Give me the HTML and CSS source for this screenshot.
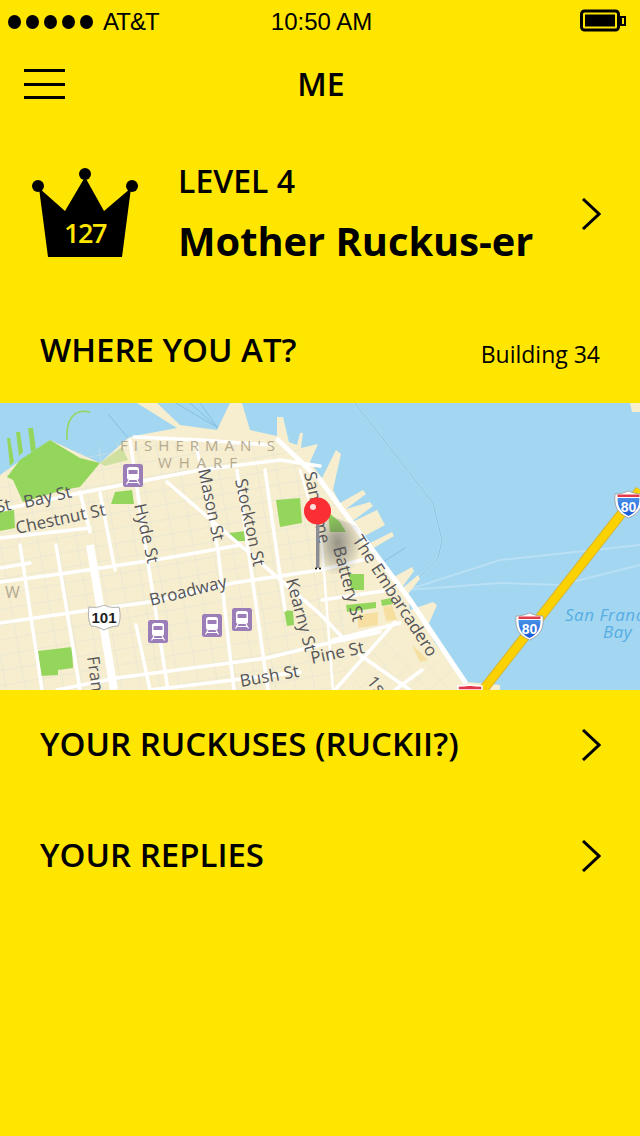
FILE: index.html
```html
<!DOCTYPE html>
<html lang="en">
<head>
    <meta charset="UTF-8">
    <meta name="viewport" content="width=device-width, initial-scale=1.0">
    <title>Me</title>
    <link rel="stylesheet" href="styles.css">
</head>
<body>

    <div class="status-bar">
        <div class="carrier">
            <span class="signal"><i></i><i></i><i></i><i></i><i></i></span>
            <span class="carrier-name">AT&amp;T</span>
        </div>
        <div class="clock">10:50 AM</div>
        <svg class="battery" width="46" height="24" viewBox="0 0 46 24">
            <rect x="1.500" y="2" width="37" height="19" rx="3" fill="none" stroke="#000" stroke-width="3"/>
            <rect x="5" y="5.500" width="30" height="12" fill="#000"/>
            <rect x="41" y="8" width="4" height="8" fill="none" stroke="#000" stroke-width="2"/>
        </svg>
    </div>

    <header class="top-bar">
        <div class="burger"><i></i><i></i><i></i></div>
        <h1>ME</h1>
    </header>

    <section class="level">
        <div class="crown">
            <svg width="108" height="92" viewBox="0 0 108 92">
                <circle cx="53" cy="6" r="6"/>
                <circle cx="6" cy="18" r="6"/>
                <circle cx="100" cy="18" r="6"/>
                <path d="M7 20 L33 43 L53 9 L72 43 L99 20 L90 89 H16 Z"/>
            </svg>
            <span class="crown-num">127</span>
        </div>
        <div class="level-text">
            <div class="level-name">LEVEL 4</div>
            <div class="level-title">Mother Ruckus-er</div>
        </div>
        <svg class="chevron" width="20" height="32" viewBox="0 0 20 32"><path d="M2 1 L18 16 L2 31"/></svg>
    </section>

    <section class="where">
        <h2>WHERE YOU AT?</h2>
        <span class="place">Building 34</span>
    </section>

    <div class="map">
        <svg width="640" height="287" viewBox="0 403 640 287">
            <defs>
                <pattern id="grid" width="19" height="15" patternUnits="userSpaceOnUse" patternTransform="rotate(-10)">
                    <path d="M0 0 H19 M0 0 V15" stroke="#e2e2d6" stroke-width="1" fill="none"/>
                </pattern>
                <pattern id="gridb" width="16" height="16" patternUnits="userSpaceOnUse" patternTransform="rotate(-42)">
                    <path d="M0 0 H16 M0 0 V16" stroke="#e8e5d2" stroke-width="1" fill="none"/>
                </pattern>
                <radialGradient id="shadow" cx="0.45" cy="0.5" r="0.55">
                    <stop offset="0" stop-color="#555" stop-opacity="0.6"/>
                    <stop offset="1" stop-color="#555" stop-opacity="0"/>
                </radialGradient>
                <linearGradient id="shield" x1="0" y1="0" x2="0" y2="1">
                    <stop offset="0" stop-color="#4a90e8"/>
                    <stop offset="1" stop-color="#1659d8"/>
                </linearGradient>
                <g id="train">
                    <rect x="0" y="0" width="20" height="23" rx="2.500" fill="#9b7db8"/>
                    <rect x="4" y="3" width="12" height="13" rx="2.500" fill="#fff"/>
                    <rect x="5.500" y="6" width="9" height="4" fill="#9b7db8"/>
                    <path d="M6 16 L3.500 20.500 M14 16 L16.500 20.500 M4 18.500 H16" stroke="#fff" stroke-width="1.200" fill="none"/>
                </g>
                <g id="i80">
                    <path d="M0 3 C5 3 9 2 13.500 0 C18 2 22 3 27 3 C28 15 25 22 13.500 27 C2 22 -1 15 0 3 Z" fill="#fff" stroke="#999" stroke-width="0.800"/>
                    <path d="M2.500 3.500 H24.500 V6 H2.500 Z" fill="#e2394b"/>
                    <path d="M2.500 7 H24.500 C24.500 15 22 21 13.500 25 C5 21 2.500 15 2.500 7 Z" fill="url(#shield)"/>
                    <text class="shield-num" x="13.500" y="20.500">80</text>
                </g>
            </defs>

            <rect x="0" y="403" width="640" height="287" fill="#a2d6f1"/>

            <!-- water lines -->
            <g fill="none" stroke="#b9e0f4" stroke-width="2">
                <path d="M355 403 L433 503 L442 540 L438 558 L407 590"/>
                <path d="M407 590 L500 560 L640 545"/>
                <path d="M407 590 L500 583 L560 585 L640 565"/>
            </g>
            <g fill="none" stroke="#86c0e2" stroke-width="1">
                <path d="M355 403 L433 503 L442 540 L438 558 L407 590"/>
                <path d="M176 403 L218 428 M190 403 L218 428 M200 403 L218 428"/>
                <path d="M108 414 L128 438"/>
                <path d="M383 562 L405 548"/>
            </g>

            <!-- land -->
            <path fill="#f6eecf" d="M0 475 L7 470 L50 440 L100 463 L128 438 L134 436 L177 428 L137 403 L157 403 L180 425 L217 430 L230 403 L242 403 L250 430 L277 436 L277 417 L283 417 L289 442 L297 445 L300 433 L303 433 L301 448 L318 444 L310 462 L322 478 L336 450 L341 454 L333 490 L340 503 L363 490 L366 494 L346 509 L370 502 L373 506 L350 523 L377 510 L385 525 L357 540 L370 543 L392 532 L394 536 L372 549 L392 578 L412 567 L414 571 L400 590 L418 575 L420 579 L408 594 L410 610 L433 602 L437 605 L427 628 L435 643 L467 682 L500 685 L500 690 L0 690 Z"/>
            <path fill="#f6eecf" d="M630 403 H640 V412 H632 Z"/>
            <path fill="url(#grid)" d="M0 476 L8 470 L128 440 L300 448 L316 476 L345 520 L345 690 L0 690 Z"/>
            <path fill="url(#gridb)" d="M335 610 L395 645 L450 665 L460 690 L330 690 Z"/>

            <!-- parks -->
            <g fill="#94d65c">
                <path d="M7 477 L20 460 L50 440 L80 458 L100 463 L80 487 L63 490 L23 502 L13 480 Z"/>
                <path d="M7 438 L10 438 L14 462 L10 466 Z M16 432 L20 432 L23 452 L19 456 Z M28 428 L33 428 L36 450 L31 452 Z"/>
                <path d="M115 492 L132 490 L134 504 L111 504 Z"/>
                <path d="M0 512 L14 510 L15 528 L0 531 Z"/>
                <path d="M276 500 L300 498 L302 523 L280 527 Z"/>
                <path d="M38 651 L72 647 L73 668 L58 670 L58 675 L41 676 Z"/>
                <path d="M229 533 L246 531 L248 541 L236 541 Z"/>
                <path d="M284 610 L293 611 L294 625 L287 626 Z"/>
                <path d="M349 574 L364 574 L364 590 L351 590 Z"/>
                <path d="M346 605 L376 602 L376 608 L347 612 Z"/>
                <path d="M381 600 L391 598 L393 604 L382 606 Z"/>
                <path d="M328 512 L340 522 L346 532 L330 532 Z"/>
            </g>
            <path fill="none" stroke="#94d65c" stroke-width="1.500" d="M67 440 C66 422 72 408 90 412"/>
            <path fill="#cfe0a0" d="M100 463 L122 447 L128 460 L105 466 Z"/>
            <g fill="#f6dfa0">
                <path d="M383 607 L392 605 L397 620 L386 621 Z"/>
                <path d="M358 615 L378 612 L378 625 L358 628 Z"/>
                <path d="M412 645 L420 652 L428 660 L420 662 Z"/>
            </g>

            <!-- streets -->
            <g fill="none" stroke="#fff" stroke-width="3.500" stroke-linecap="round">
                <path d="M0 510 L80 493 L200 470 L280 460 L320 466"/>
                <path d="M0 538 L90 528"/>
                <path d="M80 492 L90 532"/>
                <path d="M100 493 L115 570"/>
                <path d="M130 440 L146 550 L168 690"/>
                <path d="M167 482 L240 545 L320 614 L345 640"/>
                <path d="M196 445 L218 550 L234 690"/>
                <path d="M237 470 L268 690"/>
                <path d="M0 582 L67 573 L167 558 L240 545"/>
                <path d="M0 623 L90 610 L150 602 L233 583 L320 570 L370 558"/>
                <path d="M57 690 L117 678 L267 658 L320 645 L380 632"/>
                <path d="M150 690 L300 672"/>
                <path d="M20 545 L42 690"/>
                <path d="M56 545 L80 690"/>
                <path d="M136 625 L150 690"/>
                <path d="M300 470 L322 545 L333 690" stroke-width="2.500"/>
                <path d="M265 470 L285 610"/>
                <path d="M322 600 L390 590"/>
                <path d="M333 640 L400 623"/>
                <path d="M395 622 L335 690"/>
                <path d="M360 655 L410 690"/>
                <path d="M422 670 L395 690"/>
                <path d="M0 568 L30 563"/>
                <path d="M278 440 L320 480 L410 600 L465 682" stroke-width="5"/>
                <path d="M134 437 L200 440 L270 445"/>
            </g>
            <path d="M90 545 L114 690" stroke="#fff" stroke-width="8" fill="none"/>

            <!-- freeway -->
            <path d="M640 490 L483 690" stroke="#d8b62e" stroke-width="10" fill="none"/>
            <path d="M640 490 L483 690" stroke="#fbd100" stroke-width="8" fill="none"/>

            <!-- labels -->
            <g class="district">
                <text x="120" y="451" textLength="155">FISHERMAN'S</text>
                <text x="158" y="468" textLength="79">WHARF</text>
                <text x="5" y="598" class="district-w">W</text>
            </g>
            <g class="street">
                <text transform="translate(-3 513) rotate(-13)">St</text>
                <text transform="translate(25 508) rotate(-13)">Bay St</text>
                <text transform="translate(17 534) rotate(-12)">Chestnut St</text>
                <text transform="translate(134 505) rotate(77)">Hyde St</text>
                <text transform="translate(198 470) rotate(78)">Mason St</text>
                <text transform="translate(235 480) rotate(78)">Stockton St</text>
                <text transform="translate(304 473) rotate(78)">Sansome</text>
                <text transform="translate(151 606) rotate(-14)">Broadway</text>
                <text transform="translate(286 580) rotate(75)">Kearny St</text>
                <text transform="translate(333 548) rotate(75)">Battery St</text>
                <text transform="translate(352 540) rotate(57)">The Embarcadero</text>
                <text transform="translate(312 664) rotate(-12)">Pine St</text>
                <text transform="translate(241 687) rotate(-10)">Bush St</text>
                <text transform="translate(87 657) rotate(82)">Franklin</text>
                <text transform="translate(366 682) rotate(50)">1st</text>
            </g>
            <g class="bay">
                <text x="565" y="621">San Francisco</text>
                <text x="603" y="638">Bay</text>
            </g>

            <!-- transit markers -->
            <use href="#train" x="123" y="464"/>
            <use href="#train" x="148" y="620"/>
            <use href="#train" x="202" y="614"/>
            <use href="#train" x="232" y="608"/>

            <!-- shields -->
            <use href="#i80" x="516" y="613"/>
            <use href="#i80" x="615" y="491"/>
            <path d="M458 690 V686 C462 686 465 686 470 685 C475 686 478 686 482 686 V690 Z" fill="#e2394b" stroke="#fff" stroke-width="1.500"/>
            <path d="M89 607 C96 608 100 607 104 605 C108 607 112 608 119 607 C121 615 120 622 118 626 C112 626 108 628 104 630 C100 628 96 626 91 626 C88 620 88 613 89 607 Z" fill="#fff" stroke="#999" stroke-width="0.800"/>
            <text class="hwy" x="104" y="623">101</text>

            <!-- pin -->
            <path d="M320 512 L362 528 L356 574 L318 574 Z" fill="url(#shadow)"/>
            <rect x="316" y="522" width="3.500" height="46" fill="#8d8d96"/>
            <circle cx="316" cy="568.500" r="1" fill="#000"/>
            <circle cx="320" cy="568.500" r="1" fill="#000"/>
            <circle cx="317.500" cy="511" r="13.500" fill="#fb2e34"/>
            <circle cx="313" cy="507" r="3" fill="#fdd"/>
        </svg>
    </div>

    <nav class="links">
        <a class="link-row" href="#">
            <span class="link-label">YOUR RUCKUSES (RUCKII?)</span>
            <svg class="chevron" width="20" height="32" viewBox="0 0 20 32"><path d="M2 1 L18 16 L2 31"/></svg>
        </a>
        <a class="link-row" href="#">
            <span class="link-label">YOUR REPLIES</span>
            <svg class="chevron" width="20" height="32" viewBox="0 0 20 32"><path d="M2 1 L18 16 L2 31"/></svg>
        </a>
    </nav>

</body>
</html>
```

FILE: styles.css
```css
body {
    font-family: "Open Sans", "Noto Sans", sans-serif;
    margin: 0;
    padding: 0;
    width: 640px;
    height: 1136px;
    overflow: hidden;
    background-color: #ffe600;
    color: #000;
}

.status-bar {
    height: 44px;
    padding: 0 14px 0 8px;
    display: flex;
    align-items: center;
    justify-content: space-between;
    position: relative;
    font-family: "Liberation Sans", Arial, sans-serif;
    font-size: 24px;
}
.carrier {
    display: flex;
    align-items: center;
    gap: 10px;
}
.carrier-name {
    letter-spacing: -1px;
}
.signal {
    display: flex;
    gap: 5px;
}
.signal i {
    display: block;
    width: 13px;
    height: 14px;
    border-radius: 50%;
    background-color: #000;
}
.clock {
    position: absolute;
    left: 0;
    right: 0;
    text-align: center;
    margin-left: 3px;
}
.battery {
    display: block;
    margin-top: -3px;
}

.top-bar {
    height: 83px;
    display: flex;
    align-items: center;
    justify-content: center;
    position: relative;
}
.top-bar h1 {
    margin: 0 0 4px 2px;
    font-size: 32px;
    font-weight: 600;
}
.burger {
    position: absolute;
    left: 24px;
    top: 25px;
    width: 41px;
    display: flex;
    flex-direction: column;
    gap: 10.500px;
}
.burger i {
    display: block;
    height: 3px;
    background-color: #000;
}

.level {
    display: flex;
    align-items: center;
    padding: 0 39px 0 32px;
    height: 150px;
    margin-top: 13px;
}
.crown {
    position: relative;
    width: 108px;
    height: 92px;
    margin-top: -2px;
    margin-right: 38px;
}
.crown svg {
    display: block;
}
.crown-num {
    position: absolute;
    left: 0;
    right: 2px;
    top: 47px;
    text-align: center;
    color: #ffe600;
    font-size: 27px;
    line-height: 36px;
    font-weight: 600;
    letter-spacing: -1.500px;
}
.level-text {
    flex: 1;
}
.level-name {
    font-size: 32px;
    line-height: 44px;
    font-weight: 600;
}
.level-title {
    font-size: 39.800px;
    line-height: 60px;
    font-weight: 700;
    margin-top: 8px;
}

.chevron {
    display: block;
    margin-top: -2px;
}
.chevron path {
    fill: none;
    stroke: #000;
    stroke-width: 3;
}

.where {
    height: 113px;
    padding: 6px 40px 0;
    display: flex;
    justify-content: space-between;
    align-items: center;
    box-sizing: border-box;
}
.where h2 {
    margin: 0;
    font-size: 33px;
    font-weight: 600;
}
.place {
    font-size: 23px;
    margin-top: 8px;
}

.map {
    height: 287px;
}
.map svg {
    display: block;
}
.street text {
    font-family: "Open Sans", sans-serif;
    font-size: 17px;
    fill: #55555a;
}
.district text {
    font-family: "Open Sans", sans-serif;
    font-size: 15px;
    fill: #b5a98e;
}
.district .district-w {
    font-size: 16px;
}
.bay text {
    font-family: "Open Sans", sans-serif;
    font-size: 17px;
    font-style: italic;
    letter-spacing: 0.500px;
    fill: #56aee4;
}
.shield-num {
    font-family: "Liberation Sans", Arial, sans-serif;
    font-size: 14px;
    font-weight: 700;
    fill: #fff;
    text-anchor: middle;
}
.hwy {
    font-family: "Liberation Sans", Arial, sans-serif;
    font-size: 15px;
    font-weight: 700;
    fill: #222;
    text-anchor: middle;
}

.links {
    padding: 0 39px 0 40px;
}
.link-row {
    height: 111px;
    display: flex;
    align-items: center;
    justify-content: space-between;
    color: #000;
    text-decoration: none;
    font-size: 33px;
    font-weight: 600;
}
.link-label {
    padding-bottom: 4px;
}
```
